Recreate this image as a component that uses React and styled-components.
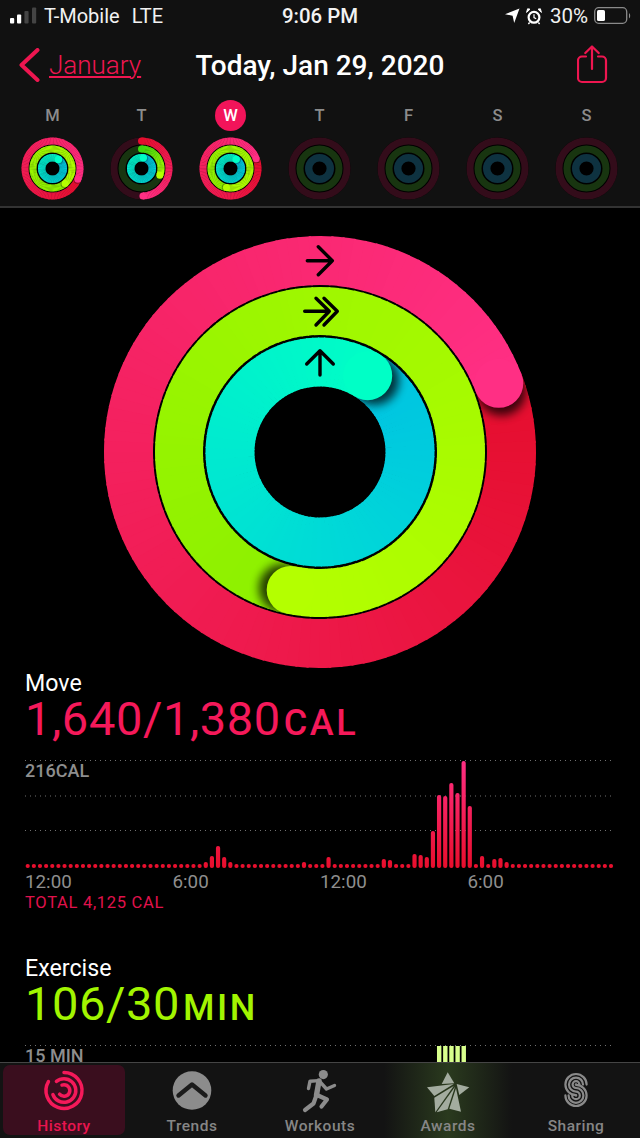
import React from "react";
import styled, { createGlobalStyle } from "styled-components";

const Global = createGlobalStyle`
  html, body { margin: 0; background: #000; }
  body { font-family: Roboto, "Liberation Sans", sans-serif; }
  * { box-sizing: border-box; }
`;

const Phone = styled.div`
  width: 640px; height: 1138px; display: flex; flex-direction: column;
  background: #000; color: #fff; overflow: hidden;
`;
const Header = styled.header`
  flex: none; height: 208px; background: #111; border-bottom: 2px solid #333;
`;
const StatusBar = styled.div`
  height: 32px; display: grid; grid-template-columns: 1fr auto 1fr; align-items: center;
  padding: 0 8px; font-size: 20px; color: #f2f2f2;
`;
const StatusLeft = styled.div`display: flex; align-items: center; gap: 7px; span + span { margin-left: 5px; }`;
const StatusRight = styled.div`display: flex; align-items: center; justify-content: flex-end; gap: 6px;`;
const Percent = styled.span`font-size: 20.5px; margin-left: 2px;`;
const Clock = styled.div`font-weight: 500; font-size: 20.4px;`;
const Nav = styled.nav`
  height: 66px; display: grid; grid-template-columns: 1fr auto 1fr; align-items: center;
  padding: 0 19px;
`;
const Back = styled.div`display: flex; align-items: center; gap: 8px; color: #ee1650; font-size: 26px; font-weight: 300;`;
const BackText = styled.span`text-decoration: underline; text-decoration-thickness: 1.5px; text-underline-offset: 2px;`;
const Title = styled.h1`margin: 0; font-size: 28px; font-weight: 500; color: #fff; white-space: nowrap;`;
const ShareSlot = styled.div`display: flex; justify-content: flex-end; padding-right: 13px;`;
const Week = styled.div`display: grid; grid-template-columns: repeat(7, 89px); padding: 2px 0 0 8px;`;
const Day = styled.div`display: flex; flex-direction: column; align-items: center; gap: 6px;`;
const DayLetter = styled.div`
  width: 31px; height: 31px; border-radius: 50%; display: flex; align-items: center; justify-content: center;
  font-size: 16.5px; font-weight: 500;
  color: ${(p) => (p.$active ? "#fff" : "#8c8c8c")};
  background: ${(p) => (p.$active ? "#f2145a" : "transparent")};
`;
const RingSvg = styled.svg`display: block; flex: none;`;
const Main = styled.main`flex: 1; min-height: 0; overflow: hidden; padding-top: 28px;`;
const BigRingWrap = styled.div`display: flex; justify-content: center; margin-bottom: 2px;`;
const Section = styled.section`padding: 0 26px 0 25px; margin-bottom: 42px;`;
const Label = styled.div`font-size: 23.2px; line-height: 26px; color: #fff;`;
const Value = styled.div`
  font-size: 47px; line-height: 46px; letter-spacing: .6px; margin-bottom: 18px; white-space: nowrap;
  color: ${(p) => p.$color};
`;
const Unit = styled.span`font-size: 36px; line-height: 0; font-weight: 500; letter-spacing: 2.5px; margin-left: 3px;`;
const ChartBox = styled.div`position: relative; width: 589px;`;
const ChartNote = styled.div`
  position: absolute; left: 0; top: 1px; font-size: 18px; line-height: 20px; font-weight: 500; color: #8e8e8e;
`;
const Axis = styled.div`
  display: grid; grid-template-columns: repeat(4, 147.5px); height: 22px; font-size: 18.8px; line-height: 22px; color: #8e8e8e;
  margin-top: 3px;
`;
const Total = styled.div`font-size: 16.5px; line-height: 20px; letter-spacing: .7px; color: #e0124c;`;
const TabBar = styled.nav`
  flex: none; height: 76px; display: grid; grid-template-columns: repeat(5, 128px);
  background: #131313; border-top: 1px solid #454545;
`;
const Tab = styled.div`
  position: relative; display: flex; flex-direction: column; align-items: center; padding-top: 2px;
  background: ${(p) => (p.$glow ? "linear-gradient(90deg, transparent 0%, #2a3a1e 50%, transparent 100%)" : "transparent")};
  color: ${(p) => (p.$active ? "#e9154f" : "#868686")};
  &::before {
    content: ""; position: absolute; inset: 2px 3px 3px; border-radius: 7px;
    background: ${(p) => (p.$active ? "#3a0e1e" : "transparent")};
  }
  > * { position: relative; }
`;
const TabLabel = styled.div`font-size: 15.5px; font-weight: 500; line-height: 18px; letter-spacing: .5px; margin-top: 2px;`;

const C = {
  red: { low: "#e50e2e", high: "#ff2f84" },
  green: { low: "#8df000", high: "#b4ff00", partLow: "#3cd810" },
  cyan: { low: "#00c2e2", high: "#00ffc6" },
};
const hex = (s) => [1, 3, 5].map((i) => parseInt(s.slice(i, i + 2), 16));
const mix = (a, b, t) => {
  const A = hex(a), B = hex(b);
  return `rgb(${A.map((v, i) => Math.round(v + (B[i] - v) * t)).join(",")})`;
};
const pt = (r, deg) => {
  const a = (deg * Math.PI) / 180;
  return [r * Math.sin(a), -r * Math.cos(a)];
};
const arc = (r, a0, a1) => {
  const [x0, y0] = pt(r, a0), [x1, y1] = pt(r, a1);
  return `M${x0.toFixed(3)} ${y0.toFixed(3)}A${r} ${r} 0 ${a1 - a0 > 180 ? 1 : 0} 1 ${x1.toFixed(3)} ${y1.toFixed(3)}`;
};

function Band({ id, r, w, p, color, track, shadow = 0.75 }) {
  const over = p >= 360;
  const end = p, start = over ? p - 360 : 0;
  const step = 3;
  const low = !over && color.partLow ? color.partLow : color.low;
  const segs = [];
  for (let a = start; a < end; a += step) {
    const t = (a - start) / (end - start);
    const last = Math.min(a + step + 0.6, end);
    segs.push(<path key={a} d={arc(r, a, last)} fill="none" strokeWidth={w} stroke={mix(low, color.high, t)} />);
  }
  const [hx, hy] = pt(r, end);
  const shift = ((w * 0.17) / r) * (180 / Math.PI);
  const [sx, sy] = pt(r, end + shift);
  const cut = segs.length - Math.ceil((((w * 1.4) / r) * (180 / Math.PI)) / step);
  const outer = r + w / 2, inner = r - w / 2;
  const [s0x, s0y] = pt(r, start);
  return (
    <g>
      {track && <circle r={r} fill="none" stroke={track} strokeWidth={w} />}
      {!over && p > 0 && <circle cx={s0x} cy={s0y} r={w / 2} fill={low} />}
      {over ? segs.slice(0, cut) : segs}
      {over && (
        <>
          <clipPath id={id}>
            <path clipRule="evenodd" d={`M${-outer} 0A${outer} ${outer} 0 1 1 ${outer} 0A${outer} ${outer} 0 1 1 ${-outer} 0ZM${-inner} 0A${inner} ${inner} 0 1 1 ${inner} 0A${inner} ${inner} 0 1 1 ${-inner} 0Z`} />
          </clipPath>
          <g clipPath={`url(#${id})`}>
            <circle cx={sx} cy={sy} r={w / 2} fill="#000" opacity={shadow} filter={`url(#${id}-b)`} />
          </g>
          <filter id={`${id}-b`} x="-50%" y="-50%" width="200%" height="200%">
            <feGaussianBlur stdDeviation={w * 0.1} />
          </filter>
          {segs.slice(cut)}
        </>
      )}
      {p > 0 && <circle cx={hx} cy={hy} r={w / 2} fill={color.high} />}
    </g>
  );
}

const Arrows = () => (
  <g fill="none" stroke="#000" strokeWidth="3.4" strokeLinecap="round" strokeLinejoin="round">
    <path d="M-12.7 -191.3H12.3M-1.7 -205.3L12.3 -191.3L-1.7 -177.3" />
    <path d="M-15.3 -140.7H9.3M-4 -153.7L9.3 -140.7L-4 -127M4 -153.7L17.3 -140.7L4 -127" />
    <path d="M0 -77V-101.3M-13.3 -88L0 -101.3L13.3 -88" />
  </g>
);

const BIG = [
  { r: 191.5, w: 49, color: C.red },
  { r: 141, w: 48, color: C.green },
  { r: 90, w: 49, color: C.cyan },
];
const MINI = [
  { r: 27.5, w: 7, color: C.red, track: "#330c1a", shadow: 0.35 },
  { r: 19.5, w: 7, color: C.green, track: "#183510", shadow: 0.3 },
  { r: 10.8, w: 7.4, color: C.cyan, track: "#0e3240", shadow: 0.25 },
];

function Rings({ id, size, spec, values, children }) {
  const h = size / 2;
  return (
    <RingSvg width={size} height={size} viewBox={`${-h} ${-h} ${size} ${size}`}>
      <circle r={h - 0.5} fill="#000" />
      {spec.map((s, i) => (
        <Band key={i} id={`${id}-${i}`} {...s} p={values[i]} />
      ))}
      {children}
    </RingSvg>
  );
}

const days = [
  { l: "M", v: [473, 500, 394] },
  { l: "T", v: [177, 110, 370] },
  { l: "W", v: [429, 552, 392], active: true },
  { l: "T", v: [0, 0, 0] },
  { l: "F", v: [0, 0, 0] },
  { l: "S", v: [0, 0, 0] },
  { l: "S", v: [0, 0, 0] },
];

const moveBars = {
  29: 6, 30: 12, 31: 22, 32: 11, 33: 6, 45: 6, 49: 11, 58: 9, 59: 8,
  63: 14, 64: 13, 65: 11, 66: 37, 67: 73, 68: 72, 69: 85, 70: 75, 71: 107, 72: 62,
  74: 12, 76: 9, 77: 10, 78: 6,
};

function MoveChart() {
  const H = 108;
  return (
    <RingSvg width="589" height="108" viewBox="0 0 589 108">
      <defs>
        <linearGradient id="moveGrad" gradientUnits="userSpaceOnUse" x1="0" y1="108" x2="0" y2="0">
          <stop offset="0" stopColor="#e80e2c" />
          <stop offset="1" stopColor="#ff2f84" />
        </linearGradient>
      </defs>
      {[0.5, 36, 70.5].map((y) => (
        <line key={y} x1="0" x2="589" y1={y} y2={y} stroke="#707070" strokeDasharray="1 4" />
      ))}
      {Array.from({ length: 96 }, (_, i) => {
        const h = moveBars[i] || 4;
        return <rect key={i} x={0.6 + i * 6.14} y={H - h} width="4.2" height={h} rx="2" fill="url(#moveGrad)" />;
      })}
    </RingSvg>
  );
}

function ExerciseChart() {
  return (
    <RingSvg width="589" height="30" viewBox="0 0 589 30">
      <line x1="0" x2="589" y1="0.5" y2="0.5" stroke="#707070" strokeDasharray="1 4" />
      {[67, 68, 69, 70, 71].map((i) => (
        <rect key={i} x={0.6 + i * 6.14} y="1" width="4.4" height="30" fill="#d8ff8c" />
      ))}
    </RingSvg>
  );
}

const Signal = () => (
  <svg width="29" height="20" viewBox="0 0 29 20">
    <rect x="2" y="12" width="4.2" height="5.5" rx="1" fill="#fff" />
    <rect x="9" y="8.5" width="4.2" height="9" rx="1" fill="#fff" />
    <rect x="16.4" y="5" width="4.2" height="12.5" rx="1" fill="#444" />
    <rect x="24" y="1.5" width="4.2" height="16" rx="1" fill="#444" />
  </svg>
);
const Location = () => (
  <svg width="15" height="16" viewBox="0 0 15 16"><path d="M0 6.2L14.5 0.5L9.2 15L7.6 7.8Z" fill="#fff" /></svg>
);
const Alarm = () => (
  <svg width="16" height="17" viewBox="0 0 16 17" fill="none">
    <circle cx="8" cy="9.3" r="5.4" stroke="#fff" strokeWidth="2.2" />
    <path d="M8 6.3V9.6L10.2 10.7" stroke="#fff" strokeWidth="1.2" />
    <path d="M0.6 4.4L4 1.2L1.6 0.8Z M15.4 4.4L12 1.2L14.4 0.8Z" fill="#fff" stroke="#fff" />
    <path d="M3.6 14.5L2.4 16M12.4 14.5L13.6 16" stroke="#fff" strokeWidth="1.4" />
  </svg>
);
const Battery = () => (
  <svg width="38" height="18" viewBox="0 0 38 18">
    <rect x="0.7" y="0.7" width="32" height="15.6" rx="4" fill="none" stroke="#8a8a8a" strokeWidth="1.3" />
    <rect x="3" y="3" width="8" height="11" rx="1.6" fill="#fff" />
    <path d="M35 6v5.4a3 3 0 0 0 1.2-2.7a3 3 0 0 0-1.2-2.7z" fill="#8a8a8a" />
  </svg>
);
const Chevron = () => (
  <svg width="22" height="34" viewBox="0 0 22 34" fill="none">
    <path d="M18.5 2L2.5 17L18.5 32" stroke="#ee1650" strokeWidth="4" strokeLinecap="round" strokeLinejoin="round" />
  </svg>
);
const Share = () => (
  <svg width="31" height="40" viewBox="0 0 31 40" fill="none" stroke="#ee1650" strokeWidth="2.2" strokeLinecap="round" strokeLinejoin="round">
    <path d="M9 11.5H5a4 4 0 0 0-4 4v17.5a4 4 0 0 0 4 4h20a4 4 0 0 0 4-4V15.5a4 4 0 0 0-4-4h-4" />
    <path d="M15 24V1.5M8.3 8L15 1.5L21.7 8" />
  </svg>
);

const HistoryIcon = () => (
  <svg width="50" height="50" viewBox="0 0 50 50" fill="none" stroke="#f5195a" strokeWidth="3.5" strokeLinecap="round">
    <g transform="translate(25 25.5)">
      <path d={arc(18, 0, 300)} />
      <path d={arc(11.8, 320, 360) + arc(11.8, 0, 250)} />
      <path d={arc(5.8, 340, 360) + arc(5.8, 0, 230)} />
    </g>
  </svg>
);
const TrendsIcon = () => (
  <svg width="50" height="50" viewBox="0 0 50 50" fill="none">
    <circle cx="25" cy="25.5" r="19.3" fill="#8c8c8c" />
    <path d="M11.5 30.5L25 19.5L38.5 30.5" stroke="#1b1b1b" strokeWidth="4.4" strokeLinecap="round" strokeLinejoin="round" />
  </svg>
);
const RunnerIcon = () => (
  <svg width="50" height="50" viewBox="0 0 50 50" fill="none" stroke="#8c8c8c" strokeLinecap="round" strokeLinejoin="round">
    <circle cx="28.3" cy="9.6" r="4.6" fill="#8c8c8c" stroke="none" />
    <path d="M24 16L21.5 30" strokeWidth="5.4" />
    <path d="M13.5 23.5L15 16.2L24 15.6L31.5 24L39.5 20.5" strokeWidth="3.4" />
    <path d="M22 30L32 34.5L26.5 41.5M21.5 30L18.5 38.5L10 45" strokeWidth="4.2" />
  </svg>
);
const StarIcon = () => (
  <svg width="50" height="50" viewBox="0 0 50 50" fill="#a3ac9f">
    <path d="M24.7 7.3L31.3 18.3L18.7 19Z" />
    <path d="M4 22.3L30.7 19L11.3 31Z" />
    <path d="M11.3 32.7L30.7 21L12.3 47.3Z" />
    <path d="M32 21.7L13.7 47.3L24.7 44.3Z" />
    <path d="M33 23.3L26.3 43.7L38 46.7Z" />
    <path d="M33.7 19L46.3 22.3L36.3 30Z" />
  </svg>
);
const sCurve = (ru, rl) => {
  const u = 19.6, l = 30.4;
  return `M${25 + ru} ${u}A${ru} ${ru} 0 1 0 25 ${u + ru}A${rl} ${rl} 0 1 1 ${25 - rl} ${l}`;
};
const SharingIcon = () => (
  <svg width="50" height="50" viewBox="0 0 50 50" fill="none" stroke="#8a8a8a" strokeWidth="2.2" strokeLinecap="round">
    <path d={sCurve(10.6, 0.2)} />
    <path d={sCurve(7, 3.8)} />
    <path d={sCurve(3.4, 7.4)} />
    <path d={sCurve(0.2, 10.6)} />
  </svg>
);

export default function App() {
  return (
    <Phone>
      <Global />
      <Header>
        <StatusBar>
          <StatusLeft>
            <Signal />
            <span>T-Mobile</span>
            <span>LTE</span>
          </StatusLeft>
          <Clock>9:06 PM</Clock>
          <StatusRight>
            <Location />
            <Alarm />
            <Percent>30%</Percent>
            <Battery />
          </StatusRight>
        </StatusBar>
        <Nav>
          <Back>
            <Chevron />
            <BackText>January</BackText>
          </Back>
          <Title>Today, Jan 29, 2020</Title>
          <ShareSlot>
            <Share />
          </ShareSlot>
        </Nav>
        <Week>
          {days.map((d, i) => (
            <Day key={i}>
              <DayLetter $active={d.active}>{d.l}</DayLetter>
              <Rings id={`mini${i}`} size={63} spec={MINI} values={d.v} />
            </Day>
          ))}
        </Week>
      </Header>
      <Main>
        <BigRingWrap>
          <Rings id="big" size={432} spec={BIG} values={[429, 552, 392]}>
            <Arrows />
          </Rings>
        </BigRingWrap>
        <Section>
          <Label>Move</Label>
          <Value $color="#f5195a">
            1,640/1,380<Unit>CAL</Unit>
          </Value>
          <ChartBox>
            <MoveChart />
            <ChartNote>216CAL</ChartNote>
          </ChartBox>
          <Axis>
            <span>12:00</span>
            <span>6:00</span>
            <span>12:00</span>
            <span>6:00</span>
          </Axis>
          <Total>TOTAL 4,125 CAL</Total>
        </Section>
        <Section>
          <Label>Exercise</Label>
          <Value $color="#a2f500">
            106/30<Unit>MIN</Unit>
          </Value>
          <ChartBox>
            <ExerciseChart />
            <ChartNote>15 MIN</ChartNote>
          </ChartBox>
        </Section>
      </Main>
      <TabBar>
        <Tab $active>
          <HistoryIcon />
          <TabLabel>History</TabLabel>
        </Tab>
        <Tab>
          <TrendsIcon />
          <TabLabel>Trends</TabLabel>
        </Tab>
        <Tab>
          <RunnerIcon />
          <TabLabel>Workouts</TabLabel>
        </Tab>
        <Tab $glow>
          <StarIcon />
          <TabLabel>Awards</TabLabel>
        </Tab>
        <Tab>
          <SharingIcon />
          <TabLabel>Sharing</TabLabel>
        </Tab>
      </TabBar>
    </Phone>
  );
}
